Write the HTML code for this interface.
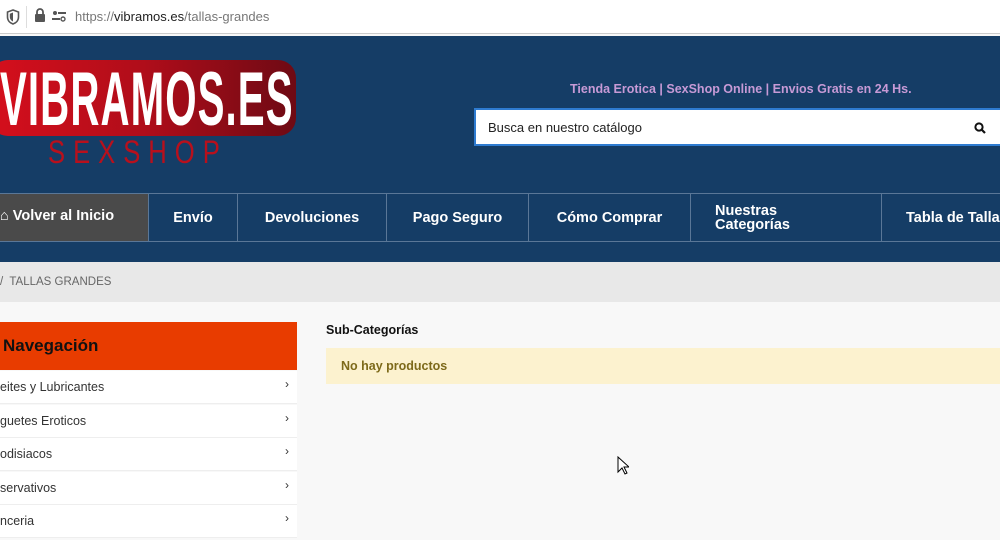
<!DOCTYPE html>
<html><head><meta charset="utf-8"><style>
*{margin:0;padding:0;box-sizing:border-box}
body{width:1000px;height:540px;overflow:hidden;background:#f8f8f8;font-family:"Liberation Sans",sans-serif;position:relative}
.abs{position:absolute}
#bar{left:0;top:0;width:1000px;height:34px;background:#fff;border-bottom:1px solid #ccc}
#hdr{left:0;top:36px;width:1000px;height:226px;background:#153d66}
.logobg{left:-10px;top:60px;width:306px;height:76px;border-radius:18px;background:linear-gradient(90deg,#d50f1c,#b00d1a 50%,#6e0a14);}
.logo{left:0px;top:56px;font-size:76px;font-weight:bold;color:#fff;letter-spacing:2px;transform:scaleX(.53);transform-origin:left top}
.sex{left:48px;top:134px;font-size:32px;color:#b8101c;letter-spacing:10px;transform:scaleX(.8);transform-origin:left top}
.tag{left:570px;top:82px;font-size:12.5px;font-weight:bold;color:#c79ad6}
.search{left:474px;top:108px;width:530px;height:38px;background:#fff;border:2px solid #2e7bd0;font-size:13px;color:#222;padding:10px 12px}
.nav{top:193px;height:49px;border-left:1px solid #5a7797;border-top:1px solid #5a7797;border-bottom:1px solid #5a7797;color:#fff;font-weight:bold;font-size:14.5px;display:flex;align-items:center;justify-content:center;line-height:14px}
.bc{left:0;top:262px;width:1000px;height:40px;background:#e8e8e8;font-size:11.5px;color:#666;padding:14px 0 0 0}
.navh{left:0;top:322px;width:297px;height:48px;background:#e83c00;color:#111;font-weight:bold;font-size:17px;padding:14px 0 0 3px}
.item{left:0;width:297px;height:33px;background:#fff;border-bottom:1px solid #eee;font-size:12.5px;color:#333;padding:9px 0 0 0}
.item span{position:absolute;right:8px;top:6px;font-size:12px}
.sub{left:326px;top:323px;font-size:12.5px;font-weight:bold;color:#111}
.np{left:326px;top:348px;width:680px;height:36px;background:#fcf2cf;color:#7d6a1a;font-weight:bold;font-size:12.5px;padding:11px 15px}
</style></head><body>
<div id="bar" class="abs">
<svg class="abs" style="left:6px;top:9px" width="14" height="16" viewBox="0 0 14 16"><path d="M7 1L1.5 3v5c0 3.5 2.5 6 5.5 7 3-1 5.5-3.5 5.5-7V3z" fill="none" stroke="#555" stroke-width="1.6"/><path d="M7 3.5v9c-2-1-3.2-2.6-3.2-4.8V4.8z" fill="#555"/></svg>
<div class="abs" style="left:26px;top:6px;width:1px;height:22px;background:#ddd"></div>
<svg class="abs" style="left:34px;top:8px" width="12" height="15" viewBox="0 0 12 15"><path d="M3 6V4a3 3 0 016 0v2" fill="none" stroke="#555" stroke-width="1.8"/><rect x="1" y="6" width="10" height="8" rx="1" fill="#555"/></svg>
<svg class="abs" style="left:52px;top:10px" width="14" height="12" viewBox="0 0 14 12"><circle cx="3" cy="3" r="2" fill="#555"/><rect x="6" y="2" width="8" height="2" fill="#555"/><rect x="0" y="8" width="8" height="2" fill="#555"/><circle cx="11" cy="9" r="2" fill="none" stroke="#555" stroke-width="1.4"/></svg>
<div class="abs" style="left:75px;top:9px;font-size:13px;color:#777">https://<span style="color:#222">vibramos.es</span>/tallas-grandes</div>
</div>
<div id="hdr" class="abs"></div>
<div class="abs logobg"></div>
<div class="abs logo">VIBRAMOS.ES</div>
<div class="abs sex">SEXSHOP</div>
<div class="abs tag">Tienda Erotica | SexShop Online | Envios Gratis en 24 Hs.</div>
<div class="abs search">Busca en nuestro catálogo
<svg class="abs" style="right:16px;top:12px" width="12" height="12" viewBox="0 0 12 12"><circle cx="5" cy="5" r="3.6" fill="none" stroke="#111" stroke-width="2"/><path d="M7.5 7.5L11 11" stroke="#111" stroke-width="2.2"/></svg></div>
<div class="abs nav" style="left:0;width:148px;background:#4a4a4a;border-left:none;justify-content:flex-start;padding-left:0;align-items:flex-start;padding-top:15px">&#8962;&nbsp;Volver al Inicio</div>
<div class="abs nav" style="left:148px;width:89px">Envío</div>
<div class="abs nav" style="left:237px;width:149px">Devoluciones</div>
<div class="abs nav" style="left:386px;width:142px">Pago Seguro</div>
<div class="abs nav" style="left:528px;width:162px">Cómo Comprar</div>
<div class="abs nav" style="left:690px;width:191px;justify-content:flex-start;padding-left:24px">Nuestras<br>Categorías</div>
<div class="abs nav" style="left:881px;width:130px;justify-content:flex-start;padding-left:24px;white-space:nowrap">Tabla de Tallas</div>
<div class="abs bc">/&nbsp; TALLAS GRANDES</div>
<div class="abs navh">Navegación</div>
<div class="abs item" style="top:371px">eites y Lubricantes<span>›</span></div>
<div class="abs item" style="top:405px">guetes Eroticos<span>›</span></div>
<div class="abs item" style="top:438px">odisiacos<span>›</span></div>
<div class="abs item" style="top:472px">servativos<span>›</span></div>
<div class="abs item" style="top:505px">nceria<span>›</span></div>
<div class="abs sub">Sub-Categorías</div>
<div class="abs np">No hay productos</div>
<svg class="abs" style="left:617px;top:456px" width="12" height="19" viewBox="0 0 12 19"><path d="M1 1v15l4-4 3 6 2-1-3-6h5z" fill="#fff" stroke="#000" stroke-width="1"/></svg>
</body></html>
